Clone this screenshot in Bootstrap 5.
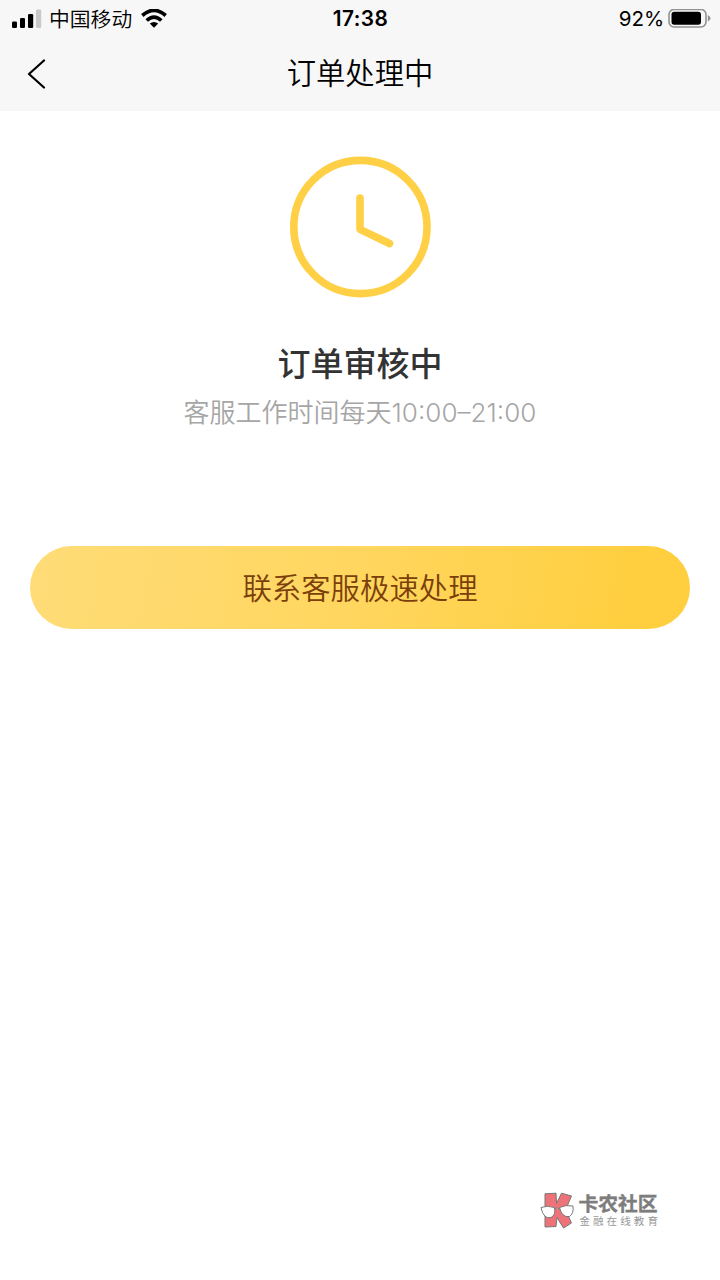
<!DOCTYPE html>
<html lang="zh-CN">
<head>
<meta charset="utf-8">
<meta name="viewport" content="width=device-width, initial-scale=1">
<title>订单处理中</title>
<link href="https://cdn.jsdelivr.net/npm/bootstrap@5.3.0/dist/css/bootstrap.min.css" rel="stylesheet">
<style>
body{font-family:Inter,"Noto Sans CJK SC",sans-serif;background:#fff;color:#000}
svg{display:block;flex:none}
.top-area{background:#f7f7f7;height:111px}
.status-bar{height:36px;line-height:36px;padding:0 9px 0 11px}
.carrier{font-size:20.8px;font-weight:350;margin:2px 9px 0 7px}
.clock-text{font-size:20.8px;font-weight:600;letter-spacing:.5px;margin-left:-1px}
.battery-text{font-size:20.6px;margin-right:4px;letter-spacing:-.1px}
.title-bar{height:75px;padding:0 27px}
.page-title{font-size:29.3px;line-height:44px;font-weight:350;margin-top:1px}
.status-icon{margin:45px 0 0}
.status-title{font-size:33px;line-height:48px;font-weight:500;color:#333;margin-top:42px}
.hours{font-size:26px;line-height:38px;font-weight:350;color:#a6a6a6;margin-top:6px}
.hours span{font-size:26.1px;font-weight:300}
.action{padding:0 30px;margin-top:114px}
.btn-contact,.btn-contact:hover{height:83px;border:0;font-size:29.4px;font-weight:350;color:#7b3f0b;background:linear-gradient(100deg,#ffdc78 0%,#ffd65e 50%,#ffcf40 90%);padding:4px 0 0}
.watermark{right:62px;bottom:51px}
.brand{font-size:19.8px;line-height:22px;font-weight:700;color:#7d7d7d;-webkit-text-stroke:.4px #7d7d7d}
.tagline{font-size:10.6px;line-height:13px;letter-spacing:3px;margin:0 -3px 0 1px;color:#999}
</style>
</head>
<body class="vh-100 overflow-hidden">
<header class="top-area">
  <div class="status-bar row g-0 align-items-center">
    <div class="col d-flex align-items-center">
      <svg width="31" height="20" viewBox="0 0 31 20"><rect x="1" y="12.500" width="5" height="6.5" rx="1.3"/><rect x="9" y="9" width="5" height="10" rx="1.300"/><rect x="17" y="5" width="5.200" height="14" rx="1.300"/><rect x="25" y="0.500" width="5.200" height="18.500" rx="1.300" fill="#c9c9c9"/></svg>
      <span class="carrier">中国移动</span>
      <svg width="26" height="20" viewBox="0 0 26 20" fill="none" stroke="#000" stroke-width="3.700"><path d="M1.300 6.500Q13-3.800 24.700 6.500M5.700 11.500Q13 4.800 20.300 11.500"/><path d="M8.800 14.600Q13 11.300 17.200 14.600L13 18.700Z" fill="#000" stroke="none"/></svg>
    </div>
    <div class="col-auto clock-text">17:38</div>
    <div class="col d-flex align-items-center justify-content-end">
      <span class="battery-text">92%</span>
      <svg width="43" height="20" viewBox="0 0 43 20"><rect x="1" y="0.500" width="37" height="17.500" rx="5" fill="none" stroke="#929292" stroke-width="1.600"/><rect x="3.500" y="2.800" width="29.500" height="13" rx="2.800"/><path d="M39.800 6Q42.500 7.200 42.500 9.200T39.800 12.400Z" fill="#929292"/></svg>
    </div>
  </div>
  <nav class="title-bar row g-0 align-items-center">
    <div class="col"><svg width="19" height="30" viewBox="0 0 19 30" fill="none" stroke="#000" stroke-width="2.200" stroke-linecap="round" stroke-linejoin="round"><path d="M17 1.500 2 15l15 13.500"/></svg></div>
    <h1 class="col-auto page-title mb-0">订单处理中</h1>
    <div class="col"></div>
  </nav>
</header>
<main class="d-flex flex-column align-items-center">
  <svg class="status-icon" width="142" height="142" viewBox="0 0 142 142" fill="none" stroke="#ffd046" stroke-width="7.600" stroke-linecap="round" stroke-linejoin="round"><circle cx="71.400" cy="71" r="66.600"/><path d="M71 42v31.300L100.500 87.500"/></svg>
  <h2 class="status-title mb-0">订单审核中</h2>
  <p class="hours mb-0">客服工作时间每天<span>10:00–21:00</span></p>
  <div class="action w-100 d-grid"><button type="button" class="btn btn-contact rounded-pill">联系客服极速处理</button></div>
</main>
<div class="watermark position-absolute d-flex align-items-center">
  <svg class="me-1" width="34" height="37" viewBox="0 0 34 37" stroke="#777" stroke-width="1" stroke-linejoin="round"><path d="M5 1.800 16 1.200 16.500 11.500 21.500 1.200 31.500 4 25.500 18 31.500 31 23.500 36 17 25.500 16 34.500 5 35Z" fill="#ee7379"/><path d="M1 15.500Q7 13 14.500 15.500 16 23 11 25.500 3.500 27.500 1 15.500ZM19.500 15.500Q26 12.500 33 14 34 21.500 29.500 24.500 22 26 19.500 15.500ZM14.700 17Q17 15 19.600 17" fill="#fff"/></svg>
  <div><div class="brand">卡农社区</div><div class="tagline">金融在线教育</div></div>
</div>
<script src="https://cdn.jsdelivr.net/npm/bootstrap@5.3.0/dist/js/bootstrap.bundle.min.js"></script>
</body>
</html>
